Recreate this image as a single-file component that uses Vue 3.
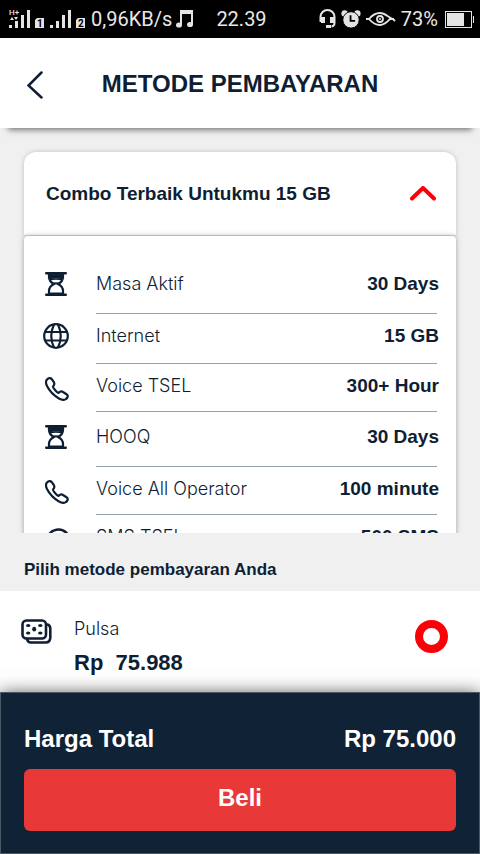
<script setup>
import { ref } from 'vue'

const expanded = ref(true)
const method = ref('pulsa')

const benefits = [
  { icon: 'hourglass', name: 'Masa Aktif', value: '30 Days' },
  { icon: 'globe', name: 'Internet', value: '15 GB' },
  { icon: 'phone', name: 'Voice TSEL', value: '300+ Hour' },
  { icon: 'hourglass', name: 'HOOQ', value: '30 Days' },
  { icon: 'phone', name: 'Voice All Operator', value: '100 minute' },
  { icon: 'sms', name: 'SMS TSEL', value: '500 SMS' },
]
</script>

<template>
  <div class="screen">
    <div class="status">
      <div class="status-side status-start">
        <svg width="22" height="20" viewBox="0 0 22 20" fill="#e4e4e4">
          <text x="0" y="6" font-size="8" font-weight="500" font-family="Roboto, sans-serif">H+</text>
          <path d="M1 11l2-3 2 3zM5 8h4l-2 3zM0 16h3v3H0zM6 12h3v7H6zM12 6h3v13h-3zM18 1h3v18h-3z" />
        </svg>
        <svg class="sim" width="9" height="20" viewBox="0 0 9 20">
          <path d="M2 9h7v10H0v-8z" fill="#e4e4e4" />
          <text x="2" y="18" font-size="10" font-weight="700" font-family="Roboto, sans-serif" fill="#000">1</text>
        </svg>
        <svg width="22" height="20" viewBox="0 0 22 20" fill="#e4e4e4">
          <path d="M0 16h3v3H0zM6 12h3v7H6zM12 6h3v13h-3zM18 1h3v18h-3z" />
        </svg>
        <svg class="sim" width="9" height="20" viewBox="0 0 9 20">
          <path d="M2 9h7v10H0v-8z" fill="#e4e4e4" />
          <text x="2" y="18" font-size="10" font-weight="700" font-family="Roboto, sans-serif" fill="#000">2</text>
        </svg>
        <span>0,96KB/s</span>
        <svg width="18" height="20" viewBox="0 0 18 20" fill="#e4e4e4">
          <path d="M4 1h13v14h-2V5H6v11H4z" />
          <ellipse cx="3" cy="16" rx="3" ry="2.6" />
          <ellipse cx="14" cy="15.500" rx="3" ry="2.600" />
        </svg>
      </div>
      <span>22.39</span>
      <div class="status-side status-end">
        <svg width="17" height="20" viewBox="0 0 17 20" fill="none" stroke="#e4e4e4" stroke-width="2">
          <path d="M1.500 13V8a7 7 0 0 1 14 0v6q0 3-3 3.500" />
          <path d="M2 8h4v6H2zM11 8h4v6h-4zM7 16h5v3H7z" fill="#e4e4e4" stroke="none" />
        </svg>
        <svg width="20" height="20" viewBox="0 0 22 20">
          <circle cx="4" cy="4" r="3.500" fill="#e4e4e4" />
          <circle cx="18" cy="4" r="3.500" fill="#e4e4e4" />
          <circle cx="11" cy="11" r="9" fill="#e4e4e4" stroke="#000" />
          <path d="M10.500 6v6h5" fill="none" stroke="#000" stroke-width="2" />
        </svg>
        <svg width="30" height="14" viewBox="0 0 30 14" fill="none" stroke="#e4e4e4" stroke-width="1.800">
          <path d="M0 7h3C8 1 12 1 14 1c5 0 8 4 13 6l2 2M3 7c5 6 9 6 11 6 5 0 8-4 10-6h4" />
          <circle cx="14" cy="7" r="3" />
          <circle cx="14" cy="7" r="1" fill="#e4e4e4" stroke="none" />
        </svg>
        <span class="charge">73%</span>
        <svg width="29" height="17" viewBox="0 0 29 17">
          <rect x="0.500" y="0.500" width="26" height="16" fill="none" stroke="#e4e4e4" />
          <path d="M2 2h17v13H2zM28 5h1v7h-1z" fill="#e4e4e4" />
        </svg>
      </div>
    </div>

    <header class="bar">
      <button class="back" type="button" aria-label="Kembali">
        <svg width="18" height="30" viewBox="0 0 18 30" fill="none" stroke="#0e1e33" stroke-width="2.500" stroke-linecap="round">
          <path d="M14.500 3.500L1.500 16.500L14.500 28.500" />
        </svg>
      </button>
      <h1>METODE PEMBAYARAN</h1>
    </header>

    <section class="plan">
      <button class="plan-head" type="button" :aria-expanded="expanded" @click="expanded = !expanded">
        <span>Combo Terbaik Untukmu 15 GB</span>
        <svg :class="{ closed: !expanded }" width="26" height="15" viewBox="0 0 26 15" fill="none" stroke="#fb0007" stroke-width="4" stroke-linecap="round" stroke-linejoin="round">
          <path d="M2 12.500L13 2L24 12.500" />
        </svg>
      </button>
      <ul v-if="expanded" class="benefits">
        <li v-for="item in benefits" :key="item.name" class="benefit" :class="item.icon">
          <div class="benefit-icon">
            <svg v-if="item.icon === 'hourglass'" width="22" height="24" viewBox="0 0 22 24" fill="none" stroke="#0e1e33" stroke-width="2.200">
              <path d="M1.200 1.200h19.600M1.200 22.800h19.600" stroke-width="2.400" stroke-linecap="round" />
              <path d="M4 2v3c0 4 3 6 5 7-2 1-5 3-5 7v3M18 2v3c0 4-3 6-5 7 2 1 5 3 5 7v3" />
              <path d="M4 2h14v5.500q-7-2-14 0zM4 20.500h14V22H4z" fill="#0e1e33" stroke="none" />
              <path d="M5 8c3-1.500 9-1.500 12 0M8 12c1-1.500 5-1.500 6 0" stroke-width="1.500" />
            </svg>
            <svg v-else-if="item.icon === 'globe'" width="26" height="26" viewBox="0 0 26 26" fill="none" stroke="#0e1e33" stroke-width="2.200">
              <circle cx="13" cy="13" r="11.800" />
              <path d="M11 1.500Q5.500 13 11 24.500M15 1.500Q20.500 13 15 24.500" />
              <path d="M2 9h22M2 17.500h22" />
            </svg>
            <svg v-else-if="item.icon === 'phone'" class="handset" width="24" height="24" viewBox="0 0 24 24" fill="none" stroke="#0e1e33" stroke-width="2.200" stroke-linejoin="round">
              <path d="M2 2.500C3.500 1 5.500 .6 6.800 2.200L8.800 5C10 7 9 8.500 8 9.500C7.500 10.500 12 15.500 13.500 16C15 14.500 16.500 14 18 15L21.500 17.200C23.500 18.500 23 20.500 21 22C19.500 23.200 17 23.200 14 21.500C9 18.500 4 13 2 9C.8 6.500 .6 4 2 2.500Z" />
            </svg>
            <svg v-else class="handset" width="26" height="26" viewBox="0 0 26 26" fill="none" stroke="#0e1e33" stroke-width="2.500">
              <path d="M3 24l1.500-5a11.500 11.500 0 1 1 4 4z" />
              <path d="M8 11h10M8 15h7" />
            </svg>
          </div>
          <div class="benefit-body">
            <span class="light">{{ item.name }}</span>
            <strong>{{ item.value }}</strong>
          </div>
        </li>
      </ul>
    </section>

    <h2>Pilih metode pembayaran Anda</h2>

    <label class="method">
      <svg class="cash" width="31" height="25" viewBox="0 0 31 25" fill="none" stroke="#0e1e33" stroke-width="2.600">
        <rect x="1.500" y="1.500" width="23.500" height="18" rx="4" />
        <path d="M26 5.500h.5q2.800 1 2.800 4v9q0 5-5 5H10q-3.500 0-4-4" />
        <g fill="#0e1e33" stroke="none">
          <ellipse cx="7.200" cy="6.500" rx="2.200" ry="1.600" />
          <ellipse cx="19.300" cy="6.500" rx="2.200" ry="1.600" />
          <ellipse cx="7.200" cy="14" rx="2.200" ry="1.600" />
          <ellipse cx="19.300" cy="14" rx="2.200" ry="1.600" />
          <ellipse cx="13.200" cy="10.200" rx="2" ry="2.400" />
        </g>
      </svg>
      <span class="method-text">
        <span class="light">Pulsa</span>
        <strong>Rp&nbsp; 75.988</strong>
      </span>
      <input v-model="method" class="choice" type="radio" name="method" value="pulsa" />
    </label>

    <footer class="total">
      <div class="total-row">
        <span>Harga Total</span>
        <span>Rp 75.000</span>
      </div>
      <button class="buy" type="button">Beli</button>
    </footer>
  </div>
</template>

<style>
body {
  margin: 0;
  background: #f0f0f0;
}
</style>

<style scoped>
* {
  box-sizing: border-box;
}
.screen {
  display: flex;
  flex-direction: column;
  height: 100vh;
  overflow: hidden;
  background: #f0f0f0;
  color: #0e1e33;
  font-family: "Liberation Sans", Arial, sans-serif;
}
svg {
  display: block;
  flex: none;
}
button {
  border: 0;
  font: inherit;
  color: inherit;
  cursor: pointer;
}
.status {
  flex: none;
  display: grid;
  grid-template-columns: 1fr auto 1fr;
  align-items: center;
  height: 38px;
  padding: 0 6px 0 9px;
  background: #000;
  color: #e8e8e8;
  font: 20px/24px Roboto, sans-serif;
}
.status-side {
  display: flex;
  align-items: center;
  gap: 5px;
  white-space: nowrap;
}
.status-start {
  gap: 4px;
}
.status-end {
  justify-content: flex-end;
}
.sim {
  margin-right: 2px;
}
.charge {
  margin-right: 2px;
}
.bar {
  flex: none;
  position: relative;
  display: grid;
  grid-template-columns: 48px 1fr 48px;
  align-items: center;
  height: 90px;
  padding: 2px 12px 0;
  background: #fff;
  box-shadow: 0 10px 6px -8px #777;
}
.back {
  display: grid;
  place-items: center;
  height: 48px;
  padding: 0;
  background: none;
}
h1 {
  margin: 0;
  font-size: 24px;
  line-height: 28px;
  text-align: center;
  white-space: nowrap;
}
.plan {
  flex: 1;
  min-height: 0;
  padding: 24px 24px 0;
  overflow: hidden;
}
.plan-head {
  display: flex;
  align-items: center;
  justify-content: space-between;
  width: 100%;
  height: 83px;
  padding: 0 20px 0 22px;
  border-radius: 12px 12px 0 0;
  background: #fff;
  box-shadow: 0 0 5px rgba(0, 0, 0, 0.2);
  font-size: 19px;
  font-weight: 700;
  line-height: 24px;
}
.closed {
  transform: rotate(180deg);
}
.benefits {
  margin: 1px 0 0;
  padding: 23px 19px 24px 18px;
  border-radius: 4px;
  background: #fff;
  box-shadow: 0 0 5px rgba(0, 0, 0, 0.35);
  list-style: none;
}
.benefit {
  display: flex;
  gap: 26px;
  height: 48px;
}
.benefit.globe {
  height: 50px;
}
.benefit.hourglass {
  height: 55px;
}
.benefit-icon {
  display: flex;
  justify-content: center;
  width: 28px;
  padding-top: 13px;
}
.globe .benefit-icon {
  padding-top: 9px;
}
.handset {
  margin-left: 2px;
}
.benefit-body {
  flex: 1;
  display: flex;
  align-items: flex-start;
  justify-content: space-between;
  padding-top: 10px;
  border-bottom: 1px solid #97a2ab;
  font-size: 19px;
  line-height: 24px;
  white-space: nowrap;
}
.hourglass .benefit-body {
  padding-top: 13px;
}
.benefit-body strong {
  margin-right: -2px;
}
.light {
  font-family: Inter, "Open Sans", sans-serif;
  font-size: 18px;
  font-weight: 300;
  line-height: 24px;
}
h2 {
  flex: none;
  margin: 0;
  padding: 27px 24px 11px;
  font-size: 17px;
  line-height: 20px;
}
.method {
  flex: none;
  display: flex;
  align-items: flex-start;
  padding: 26px 32px 15px 21px;
  background: #fff;
}
.cash {
  margin: 2px 22px 0 0;
}
.method-text {
  flex: 1;
  display: flex;
  flex-direction: column;
  gap: 8px;
}
.method-text strong {
  font-size: 22px;
  line-height: 28px;
}
.choice {
  appearance: none;
  width: 33px;
  height: 33px;
  margin: 3px 0 0;
  border: 8px solid #fb0007;
  border-radius: 50%;
  background: #fff;
}
.total {
  flex: none;
  position: relative;
  padding: 32px 23px 22px;
  border: 1px solid #4b5866;
  background: #102236;
  box-shadow: 0 0 16px rgba(0, 0, 0, 0.6);
  color: #fff;
  font-size: 24px;
  font-weight: 700;
  line-height: 28px;
}
.total-row {
  display: flex;
  justify-content: space-between;
  margin-bottom: 16px;
}
.buy {
  display: block;
  width: 100%;
  height: 62px;
  padding: 0 0 4px;
  border-radius: 6px;
  background: #e83838;
}
</style>
